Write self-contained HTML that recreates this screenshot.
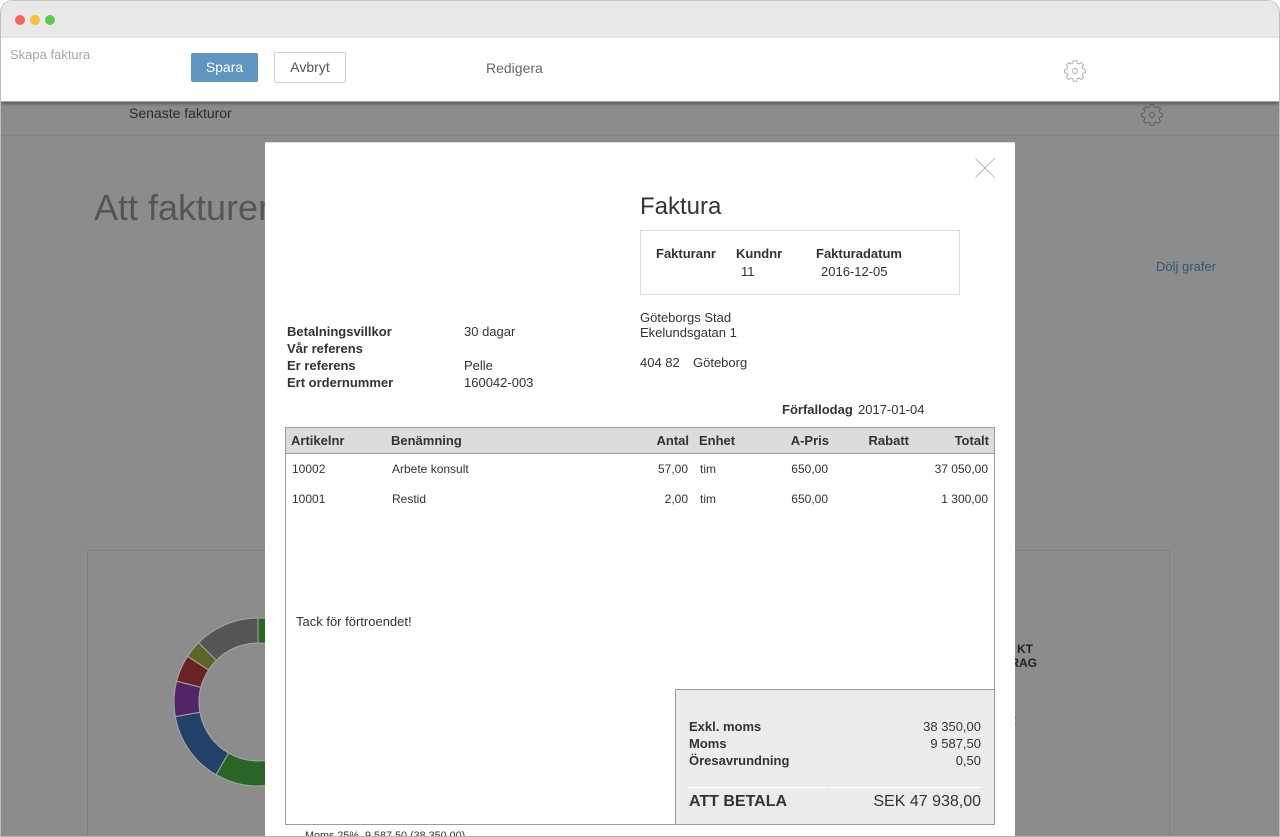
<!DOCTYPE html>
<html lang="sv">
<head>
<meta charset="utf-8">
<title>Skapa faktura</title>
<style>
html,body{margin:0;padding:0;background:#fff;}
body{width:1280px;height:837px;overflow:hidden;position:relative;font-family:"Liberation Sans",Arial,sans-serif;color:#333;}
.t{position:absolute;white-space:nowrap;line-height:16px;font-size:13px;color:#333;}
.s{font-size:12px;}
.b{font-weight:bold;}
.r{text-align:right;}
#win{position:absolute;left:0;top:0;width:1280px;height:837px;overflow:hidden;border-radius:12px 12px 0 0;}
#page{position:absolute;left:1px;top:102px;width:1278px;height:734px;background:#8c8c8c;overflow:hidden;}
#titlebar{position:absolute;left:1px;top:1px;width:1278px;height:37px;background:#e9e9e9;border-radius:11px 11px 0 0;}
#frame{position:absolute;left:0;top:0;width:1278px;height:836px;border:1px solid #bdbdbd;border-top:1px solid #c8c8c8;border-bottom:0;border-radius:12px 12px 0 0;pointer-events:none;}
#toolbar{position:absolute;left:1px;top:38px;width:1278px;height:63px;background:#fff;box-shadow:0 2px 3px rgba(0,0,0,.35);border-bottom:1px solid #a5a5a5;}
.dot{position:absolute;top:15px;width:10px;height:10px;border-radius:50%;}
#modal{position:absolute;left:265px;top:142px;width:750px;height:695px;background:#fff;}
</style>
</head>
<body>
<div id="win">
  <div id="page">
    <div style="position:absolute;left:0;top:33px;width:1278px;height:1px;background:#848484;"></div>
    <div class="t" style="left:128px;top:3px;font-size:14px;color:#2b2b2b;">Senaste fakturor</div>
    <svg style="position:absolute;left:1139px;top:0.5px;" width="24" height="24" viewBox="0 0 24 24" fill="none" stroke="#5c5c5c" stroke-width=".9" stroke-linejoin="round">
      <circle cx="12" cy="12" r="2.5"/>
      <path d="M10.02 4.04L10.18 1.66H13.82L13.98 4.04A8.2 8.2 0 0 1 16.22 4.97"/>
      <path transform="rotate(45 12 12)" d="M10.02 4.04L10.18 1.66H13.82L13.98 4.04A8.2 8.2 0 0 1 16.22 4.97"/>
      <path transform="rotate(90 12 12)" d="M10.02 4.04L10.18 1.66H13.82L13.98 4.04A8.2 8.2 0 0 1 16.22 4.97"/>
      <path transform="rotate(135 12 12)" d="M10.02 4.04L10.18 1.66H13.82L13.98 4.04A8.2 8.2 0 0 1 16.22 4.97"/>
      <path transform="rotate(180 12 12)" d="M10.02 4.04L10.18 1.66H13.82L13.98 4.04A8.2 8.2 0 0 1 16.22 4.97"/>
      <path transform="rotate(225 12 12)" d="M10.02 4.04L10.18 1.66H13.82L13.98 4.04A8.2 8.2 0 0 1 16.22 4.97"/>
      <path transform="rotate(270 12 12)" d="M10.02 4.04L10.18 1.66H13.82L13.98 4.04A8.2 8.2 0 0 1 16.22 4.97"/>
      <path transform="rotate(315 12 12)" d="M10.02 4.04L10.18 1.66H13.82L13.98 4.04A8.2 8.2 0 0 1 16.22 4.97"/>
    </svg>
    <div class="t" style="left:93px;top:84px;font-size:36px;line-height:44px;color:#555;">Att fakturera</div>
    <div class="t" style="left:1155px;top:157px;color:#2f5673;">Dölj grafer</div>
    <div style="position:absolute;left:86px;top:448px;width:1083px;height:300px;border:1px solid #7f7f7f;box-sizing:border-box;"></div>
    <svg style="position:absolute;left:171px;top:514px;" width="172" height="172" viewBox="0 0 172 172">
      <g stroke="#a8a8a8" stroke-width="1">
        <path d="M86 2A84 84 0 0 1 86 170A84 84 0 0 1 44 158.7L56.5 137.1A59 59 0 0 0 86 145A59 59 0 0 0 86 27z" fill="#2b6427"/>
        <path d="M44 158.7A84 84 0 0 1 3.3 100.6L27.9 96.2A59 59 0 0 0 56.5 137.1z" fill="#214166"/>
        <path d="M3.3 100.6A84 84 0 0 1 4.6 65.1L28.8 71.3A59 59 0 0 0 27.9 96.2z" fill="#522665"/>
        <path d="M4.6 65.1A84 84 0 0 1 15.6 40.3L36.6 54A59 59 0 0 0 28.8 71.3z" fill="#672323"/>
        <path d="M15.6 40.3A84 84 0 0 1 26.6 26.6L44.3 44.3A59 59 0 0 0 36.6 54z" fill="#5f6427"/>
        <path d="M26.6 26.6A84 84 0 0 1 86 2V27A59 59 0 0 0 44.3 44.3z" fill="#555"/>
      </g>
    </svg>
    <div class="t b r" style="left:932px;width:100px;top:540px;font-size:12px;line-height:14px;color:#222;">KT</div>
    <div class="t b r" style="left:936px;width:100px;top:554px;font-size:12px;line-height:14px;color:#222;">RAG</div>
    <div class="t" style="left:1012px;top:610px;color:#222;">:</div>
  </div>

  <div id="titlebar"></div>
  <div class="dot" style="left:14.500px;background:#f2645a;"></div>
  <div class="dot" style="left:29.500px;background:#f9bd3f;"></div>
  <div class="dot" style="left:44.500px;background:#5fc94f;"></div>

  <div id="toolbar"></div>
  <div class="t" style="left:10px;top:47px;color:#a6a6a6;">Skapa faktura</div>
  <div style="position:absolute;left:191px;top:53px;width:67px;height:29px;background:#5e95c1;border-radius:2px;color:#fff;font-size:14px;line-height:29px;text-align:center;">Spara</div>
  <div style="position:absolute;left:274px;top:52px;width:72px;height:31px;box-sizing:border-box;border:1px solid #cfcfcf;border-radius:2px;color:#555;font-size:14px;line-height:29px;text-align:center;">Avbryt</div>
  <div class="t" style="left:486px;top:60px;font-size:14px;color:#666;">Redigera</div>
  <svg style="position:absolute;left:1063px;top:59px;" width="24" height="24" viewBox="0 0 24 24" fill="none" stroke="#aaa" stroke-width=".9" stroke-linejoin="round">
    <circle cx="12" cy="12" r="2.500"/>
    <path d="M10.02 4.04L10.18 1.66H13.82L13.98 4.04A8.2 8.2 0 0 1 16.22 4.97"/>
    <path transform="rotate(45 12 12)" d="M10.02 4.04L10.18 1.66H13.82L13.98 4.04A8.2 8.2 0 0 1 16.22 4.97"/>
    <path transform="rotate(90 12 12)" d="M10.02 4.04L10.18 1.66H13.82L13.98 4.04A8.2 8.2 0 0 1 16.22 4.97"/>
    <path transform="rotate(135 12 12)" d="M10.02 4.04L10.18 1.66H13.82L13.98 4.04A8.2 8.2 0 0 1 16.22 4.97"/>
    <path transform="rotate(180 12 12)" d="M10.02 4.04L10.18 1.66H13.82L13.98 4.04A8.2 8.2 0 0 1 16.22 4.97"/>
    <path transform="rotate(225 12 12)" d="M10.02 4.04L10.18 1.66H13.82L13.98 4.04A8.2 8.2 0 0 1 16.22 4.97"/>
    <path transform="rotate(270 12 12)" d="M10.02 4.04L10.18 1.66H13.82L13.98 4.04A8.2 8.2 0 0 1 16.22 4.97"/>
    <path transform="rotate(315 12 12)" d="M10.02 4.04L10.18 1.66H13.82L13.98 4.04A8.2 8.2 0 0 1 16.22 4.97"/>
  </svg>

  <div id="modal">
    <div style="position:absolute;left:0;top:0;width:750px;height:1px;background:#d8d8d8;"></div>
    <svg style="position:absolute;left:710px;top:16px;" width="20" height="20" viewBox="0 0 20 20" stroke="#a0a0a0" stroke-width=".8" fill="none"><path d="M0.500 0.500L19.500 19.500M19.500 0.500L0.500 19.500"/></svg>

    <div class="t" style="left:375px;top:50px;font-size:24px;line-height:30px;color:#333;">Faktura</div>
    <div style="position:absolute;left:375px;top:88px;width:320px;height:65px;box-sizing:border-box;border:1px solid #dcdcdc;"></div>
    <div class="t b" style="left:391px;top:104px;">Fakturanr</div>
    <div class="t b" style="left:471px;top:104px;">Kundnr</div>
    <div class="t b" style="left:551px;top:104px;">Fakturadatum</div>
    <div class="t" style="left:476px;top:122px;">11</div>
    <div class="t" style="left:556px;top:122px;">2016-12-05</div>

    <div class="t" style="left:375px;top:168px;">Göteborgs Stad</div>
    <div class="t" style="left:375px;top:183px;">Ekelundsgatan 1</div>
    <div class="t" style="left:375px;top:213px;">404 82</div>
    <div class="t" style="left:428px;top:213px;">Göteborg</div>

    <div class="t b" style="left:22px;top:182px;">Betalningsvillkor</div>
    <div class="t b" style="left:22px;top:199px;">Vår referens</div>
    <div class="t b" style="left:22px;top:216px;">Er referens</div>
    <div class="t b" style="left:22px;top:233px;">Ert ordernummer</div>
    <div class="t" style="left:199px;top:182px;">30 dagar</div>
    <div class="t" style="left:199px;top:216px;">Pelle</div>
    <div class="t" style="left:199px;top:233px;">160042-003</div>

    <div class="t b" style="left:517px;top:260px;">Förfallodag</div>
    <div class="t" style="left:593px;top:260px;">2017-01-04</div>

    <div style="position:absolute;left:20px;top:285px;width:710px;height:398px;box-sizing:border-box;border:1px solid #9b9b9b;"></div>
    <div style="position:absolute;left:21px;top:286px;width:708px;height:25px;background:#dcdcdc;border-bottom:1px solid #9b9b9b;"></div>
    <div class="t b" style="left:26px;top:291px;">Artikelnr</div>
    <div class="t b" style="left:126px;top:291px;">Benämning</div>
    <div class="t b r" style="left:364px;width:60px;top:291px;">Antal</div>
    <div class="t b" style="left:434px;top:291px;">Enhet</div>
    <div class="t b r" style="left:504px;width:60px;top:291px;">A-Pris</div>
    <div class="t b r" style="left:584px;width:60px;top:291px;">Rabatt</div>
    <div class="t b r" style="left:654px;width:70px;top:291px;">Totalt</div>

    <div class="t s" style="left:27px;top:319px;">10002</div>
    <div class="t s" style="left:127px;top:319px;">Arbete konsult</div>
    <div class="t s r" style="left:363px;width:60px;top:319px;">57,00</div>
    <div class="t s" style="left:435px;top:319px;">tim</div>
    <div class="t s r" style="left:503px;width:60px;top:319px;">650,00</div>
    <div class="t s r" style="left:653px;width:70px;top:319px;">37 050,00</div>

    <div class="t s" style="left:27px;top:349px;">10001</div>
    <div class="t s" style="left:127px;top:349px;">Restid</div>
    <div class="t s r" style="left:363px;width:60px;top:349px;">2,00</div>
    <div class="t s" style="left:435px;top:349px;">tim</div>
    <div class="t s r" style="left:503px;width:60px;top:349px;">650,00</div>
    <div class="t s r" style="left:653px;width:70px;top:349px;">1 300,00</div>

    <div class="t" style="left:31px;top:472px;">Tack för förtroendet!</div>

    <div style="position:absolute;left:410px;top:547px;width:320px;height:136px;box-sizing:border-box;background:#ececec;border:1px solid #9b9b9b;"></div>
    <div class="t b" style="left:424px;top:577px;">Exkl. moms</div>
    <div class="t b" style="left:424px;top:594px;">Moms</div>
    <div class="t b" style="left:424px;top:611px;">Öresavrundning</div>
    <div class="t r" style="left:596px;width:120px;top:577px;">38 350,00</div>
    <div class="t r" style="left:596px;width:120px;top:594px;">9 587,50</div>
    <div class="t r" style="left:596px;width:120px;top:611px;">0,50</div>
    <div style="position:absolute;left:423px;top:645px;width:139px;height:1px;background:#fff;"></div>
    <div style="position:absolute;left:565px;top:645px;width:151px;height:1px;background:#fff;"></div>
    <div class="t b" style="left:424px;top:650px;font-size:16px;line-height:20px;">ATT BETALA</div>
    <div class="t r" style="left:556px;width:160px;top:650px;font-size:16px;line-height:20px;">SEK 47 938,00</div>

    <div class="t" style="left:40px;top:686px;font-size:10.800px;">Moms 25%&nbsp; 9 587,50 (38 350,00)</div>
  </div>
  <div style="position:absolute;left:0;top:836px;width:1280px;height:1px;background:#b5b5b5;"></div>
  <div id="frame"></div>
</div>
</body>
</html>
